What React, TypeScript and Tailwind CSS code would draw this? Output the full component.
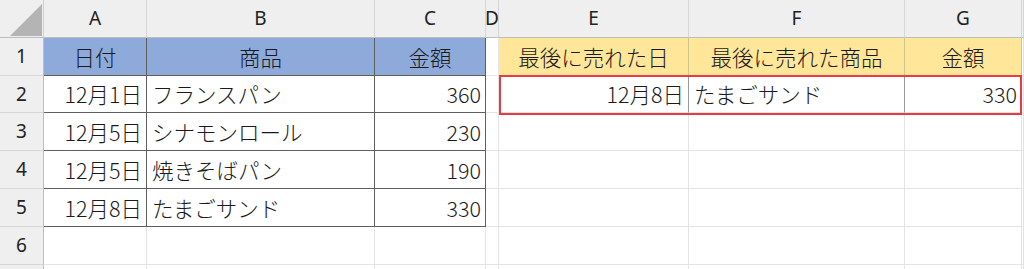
import React from 'react';

// Sheet geometry (px)
const COLS = ['A', 'B', 'C', 'D', 'E', 'F', 'G', ''];
const ROW_NUMS = ['1', '2', '3', '4', '5', '6', ''];

type Cell = { text?: string; align?: 'left' | 'right' | 'center'; cls?: string };

const blue = 'bg-[#8eaadb]';
const yellow = 'bg-[#ffe699]';
const dark = 'border-r-[#5f5f5f] border-b-[#5f5f5f]';

const rows: Cell[][] = [
  [
    { text: '日付', align: 'center', cls: `${blue} ${dark}` },
    { text: '商品', align: 'center', cls: `${blue} ${dark}` },
    { text: '金額', align: 'center', cls: `${blue} ${dark}` },
    {},
    { text: '最後に売れた日', align: 'center', cls: `${yellow} border-r-[#d0c48a]` },
    { text: '最後に売れた商品', align: 'center', cls: `${yellow} border-r-[#d0c48a]` },
    { text: '金額', align: 'center', cls: `${yellow} border-r-[#d0c48a]` },
    {},
  ],
  [
    { text: '12月1日', align: 'right', cls: dark },
    { text: 'フランスパン', align: 'left', cls: dark },
    { text: '360', align: 'right', cls: dark },
    {},
    { text: '12月8日', align: 'right', cls: 'border-r-[#9a9a9a]' },
    { text: 'たまごサンド', align: 'left', cls: 'border-r-[#9a9a9a]' },
    { text: '330', align: 'right' },
    {},
  ],
  [
    { text: '12月5日', align: 'right', cls: dark },
    { text: 'シナモンロール', align: 'left', cls: dark },
    { text: '230', align: 'right', cls: dark },
    {}, {}, {}, {}, {},
  ],
  [
    { text: '12月5日', align: 'right', cls: dark },
    { text: '焼きそばパン', align: 'left', cls: dark },
    { text: '190', align: 'right', cls: dark },
    {}, {}, {}, {}, {},
  ],
  [
    { text: '12月8日', align: 'right', cls: dark },
    { text: 'たまごサンド', align: 'left', cls: dark },
    { text: '330', align: 'right', cls: dark },
    {}, {}, {}, {}, {},
  ],
  [{}, {}, {}, {}, {}, {}, {}, {}],
  [{}, {}, {}, {}, {}, {}, {}, {}],
];

const alignCls = {
  left: 'justify-start pl-[5px]',
  right: 'justify-end pr-[4px]',
  center: 'justify-center',
};

const App: React.FC = () => {
  return (
    <div className="relative w-[1024px] h-[269px] overflow-hidden bg-white">
      <div
        className="grid grid-cols-[44px_103px_228px_111px_13px_190px_216px_117px_1fr] grid-rows-[38px_38px_37px_38px_38px_38px_38px_38px]"
        style={{ fontFamily: '"Noto Sans CJK JP", "Noto Sans", sans-serif' }}
      >
        {/* corner */}
        <div className="bg-[#efefef] border-r border-b border-r-[#cfcfcf] border-b-[#bdbdbd] flex items-start justify-start">
          <svg width="43" height="37" viewBox="0 0 43 37">
            <polygon points="10,36 42,36 42,4" fill="#b4b4b4" />
          </svg>
        </div>

        {/* column headers */}
        {COLS.map((c, i) => (
          <div
            key={`h${i}`}
            className="bg-[#efefef] border-r border-b border-r-[#d6d6d6] border-b-[#bdbdbd] flex items-center justify-center text-[19px] text-[#222]"
            style={{ fontFamily: '"Noto Sans", "Open Sans", sans-serif' }}
          >
            {c}
          </div>
        ))}

        {rows.map((row, r) => (
          <React.Fragment key={`r${r}`}>
            <div
              className="bg-[#efefef] border-r border-b border-r-[#bdbdbd] border-b-[#d6d6d6] flex items-center justify-center text-[19px] text-[#222]"
              style={{ fontFamily: '"Noto Sans", "Open Sans", sans-serif' }}
            >
              {ROW_NUMS[r]}
            </div>
            {row.map((cell, c) => (
              <div
                key={`c${r}-${c}`}
                className={`border-r border-b border-[#e4e4e4] flex items-center whitespace-nowrap overflow-hidden text-[21.5px] leading-none font-light text-[#1a1a1a] ${
                  cell.align ? alignCls[cell.align] : ''
                } ${cell.cls ?? ''}`}
              >
                {cell.text}
              </div>
            ))}
          </React.Fragment>
        ))}
      </div>

      {/* highlight box around E2:G2 */}
      <div className="absolute left-[499px] top-[75px] w-[523px] h-[40px] border-2 border-[#ea3a44] pointer-events-none" />
    </div>
  );
};

export default App;
